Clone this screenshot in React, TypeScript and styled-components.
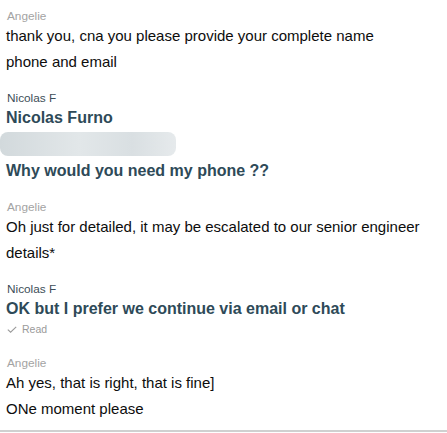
import React from 'react';
import styled, { createGlobalStyle } from 'styled-components';

const GlobalStyle = createGlobalStyle`
  html, body {
    margin: 0;
    padding: 0;
    background: #fff;
    font-family: "Liberation Sans", Arial, Helvetica, sans-serif;
  }
`;

const Thread = styled.div`
  box-sizing: border-box;
  width: 447px;
  height: 432px;
  padding: 9px 6px 0;
  display: flex;
  flex-direction: column;
  gap: 16px;
  border-bottom: 2px solid #d0d0d0;
  overflow: hidden;
`;

const Group = styled.div`
  display: flex;
  flex-direction: column;
`;

const Sender = styled.div<{ $mine?: boolean }>`
  font-size: 11.8px;
  line-height: 14px;
  color: ${(p) => (p.$mine ? '#3d4e58' : '#a3a3a3')};
  padding-left: 1px;
`;

const Line = styled.div<{ $mine?: boolean }>`
  font-size: ${(p) => (p.$mine ? '16px' : '15px')};
  line-height: 26px;
  font-weight: ${(p) => (p.$mine ? 700 : 400)};
  color: ${(p) => (p.$mine ? '#2e4a58' : '#0d0d0d')};
  white-space: nowrap;
`;

const Redacted = styled.div`
  width: 176px;
  height: 24px;
  margin: 1px 0 2px -6px;
  border-radius: 8px;
  background: linear-gradient(90deg, #d2d9dc 0%, #e2e7e9 45%, #d9dfe2 75%, #e6eaec 100%);
  filter: blur(0.6px);
`;

const Receipt = styled.div`
  display: flex;
  align-items: center;
  gap: 5px;
  font-size: 10.5px;
  line-height: 14px;
  color: #9a9a9a;
  padding-left: 1px;
  margin-bottom: 4px;
`;

type Message = {
  from: string;
  mine?: boolean;
  lines: (string | null)[];
  read?: boolean;
};

const messages: Message[] = [
  { from: 'Angelie', lines: ['thank you, cna you please provide your complete name', 'phone and email'] },
  { from: 'Nicolas F', mine: true, lines: ['Nicolas Furno', null, 'Why would you need my phone ??'] },
  { from: 'Angelie', lines: ['Oh just for detailed, it may be escalated to our senior engineer', 'details*'] },
  { from: 'Nicolas F', mine: true, lines: ['OK but I prefer we continue via email or chat'], read: true },
  { from: 'Angelie', lines: ['Ah yes, that is right, that is fine]', 'ONe moment please'] },
];

const Check = () => (
  <svg width="10" height="7" viewBox="0 0 10 7" fill="none">
    <path d="M0.8 3.6 L3.6 6.2 L9.2 0.8" stroke="#9a9a9a" strokeWidth="1.1" />
  </svg>
);

export default function App() {
  return (
    <>
      <GlobalStyle />
      <Thread>
        {messages.map((m, i) => (
          <Group key={i}>
            <Sender $mine={m.mine}>{m.from}</Sender>
            {m.lines.map((l, j) =>
              l === null ? (
                <Redacted key={j} />
              ) : (
                <Line key={j} $mine={m.mine}>
                  {l}
                </Line>
              )
            )}
            {m.read && (
              <Receipt>
                <Check />
                Read
              </Receipt>
            )}
          </Group>
        ))}
      </Thread>
    </>
  );
}
